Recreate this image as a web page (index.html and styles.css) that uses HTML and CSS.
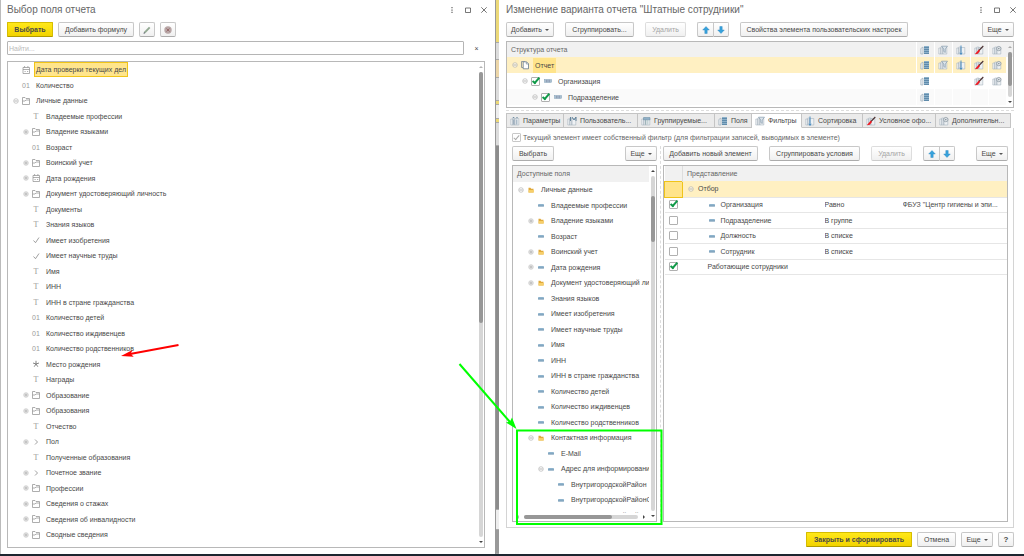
FILE: index.html
```html
<!DOCTYPE html>
<html lang="ru">
<head>
<meta charset="utf-8">
<title>Изменение варианта отчета</title>
<link rel="stylesheet" href="styles.css">
</head>
<body>
<svg class="defs" aria-hidden="true">
  <symbol id="plus" viewBox="0 0 10 10"><circle cx="5" cy="5" r="2.300" fill="#f4f4f4" stroke="#bbb" stroke-width=".6"/><path d="M3.400 5h3.200M5 3.400v3.200" stroke="#999" stroke-width=".6"/></symbol>
  <symbol id="minus" viewBox="0 0 10 10"><circle cx="5" cy="5" r="2.300" fill="#fff" fill-opacity=".6" stroke="#aaa" stroke-width=".6"/><path d="M3.400 5h3.200" stroke="#888" stroke-width=".6"/></symbol>
  <symbol id="folder" viewBox="0 0 10 10"><path d="M1.500 8.500v-7h2.500l1 1h3.500v6zM1.500 5h2.500l1-1h3.500" fill="none" stroke="#999" stroke-width=".8"/></symbol>
  <symbol id="cal" viewBox="0 0 10 10"><path d="M2 2.500h6.500v6H2zM2 4.500h6.500M3.600 1v1.500M6.900 1v1.500M3.500 6.500h1.200M6 6.500h1.200" fill="none" stroke="#8c8c8c" stroke-width=".7"/></symbol>
  <symbol id="tick" viewBox="0 0 10 10"><path d="M2.500 5.500l2 2.200L8 2.500" fill="none" stroke="#888" stroke-width=".8"/></symbol>
  <symbol id="chev" viewBox="0 0 10 10"><path d="M4 2.500L6.500 5 4 7.500" fill="none" stroke="#888" stroke-width=".8"/></symbol>
  <symbol id="star" viewBox="0 0 10 10"><path d="M5 5V1.800M5 5L2 4M5 5l3-1M5 5L3.200 7.700M5 5l1.800 2.700" fill="none" stroke="#777" stroke-width=".9"/></symbol>
  <symbol id="yfold" viewBox="0 0 10 10"><path d="M2.500 2.800h2l.7.9h2.300v3.800h-5z" fill="#e0a93a"/><path d="M3 5h4.800v2.500H2.500z" fill="#f7cf6a"/></symbol>
  <symbol id="dash" viewBox="0 0 10 10"><rect x="2" y="4" width="6" height="2.400" rx=".4" fill="#8fb4cd"/><path d="M2 6h6" stroke="#6889a5" stroke-width=".6"/></symbol>
  <symbol id="group" viewBox="0 0 10 10"><rect x="1.500" y="3.700" width="7" height="2.600" fill="#a9bfd0" stroke="#7d9bb3" stroke-width=".5"/><path d="M3.800 3.700v2.600M6.200 3.700v2.600" stroke="#668" stroke-width=".5"/></symbol>
  <symbol id="pages" viewBox="0 0 10 10"><path d="M1.500 1.500h3.500M1.500 1.500v6h1.500" fill="none" stroke="#7d8995" stroke-width=".8"/><path d="M3.200 1.800h3.300l2 2v5H3.200z" fill="#fff" stroke="#66798a" stroke-width=".8"/><path d="M6.300 1.800v2.200h2.200" fill="none" stroke="#66798a" stroke-width=".6"/></symbol>
  <symbol id="frame" viewBox="0 0 10 10"><path d="M.8 9V3h2v6zM2.800 2h2v7h-2zM4.800 2.500h4V9h-4z" fill="#eef1f4" stroke="#9babb7" stroke-width=".5"/></symbol>
  <symbol id="fields" viewBox="0 0 10 10"><path d="M.8 9V3.500L3 2v7z" fill="#e8edf1" stroke="#95a6b3" stroke-width=".6"/><path d="M4 1h5v8H4z" fill="#8db1ca"/><path d="M4 2.500h5M4 4.500h5M4 6.500h5M4 8.500h5" stroke="#4d7b9d" stroke-width=".7"/></symbol>
  <symbol id="filter" viewBox="0 0 10 10"><use href="#frame"/><path d="M3.500 1.200h6L7.300 4v3.500L5.800 6.500V4z" fill="#dbe4eb" stroke="#7890a2" stroke-width=".6"/></symbol>
  <symbol id="sort" viewBox="0 0 10 10"><use href="#frame"/><path d="M5 .5v8.800M3.800 7.800L5 9.400l1.200-1.600" fill="none" stroke="#3c87c0" stroke-width=".9"/></symbol>
  <symbol id="brush" viewBox="0 0 10 10"><use href="#frame"/><path d="M9.300 1L5 5.500" stroke="#4b3030" stroke-width="1.100"/><path d="M4.800 4.600L.8 9.300l3-.6L6 6z" fill="#f01820"/></symbol>
  <symbol id="gear" viewBox="0 0 10 10"><use href="#frame"/><circle cx="6.800" cy="3.600" r="2.200" fill="#dde2e6" stroke="#87939d" stroke-width=".7"/><circle cx="6.800" cy="3.600" r=".7" fill="#73818c"/></symbol>
  <symbol id="params" viewBox="0 0 10 10"><use href="#frame"/><path d="M2.500 1.200l1 1 1-1zM6 1.200l1 1 1-1z" fill="#456c88"/><path d="M3.800 3.500v5M6.800 3.500v5" stroke="#64839a" stroke-width=".7"/></symbol>
  <symbol id="user" viewBox="0 0 10 10"><use href="#frame"/><path d="M3.500 1v4M5 1l2 3 2-3v4" fill="none" stroke="#486f8c" stroke-width=".8"/></symbol>
  <symbol id="grp" viewBox="0 0 10 10"><use href="#frame"/><path d="M2.500 1.500h6.500v2.300H2.500z" fill="#8fb0c7" stroke="#6788a0" stroke-width=".5"/><path d="M4.500 4v4.500M6.800 4v4.500" stroke="#8aa" stroke-width=".6"/></symbol>
  <symbol id="up" viewBox="0 0 10 10"><path d="M5 1.500L8.300 5H6.200v3.500H3.800V5H1.700z" fill="#36a2dc" stroke="#2b84bd" stroke-width=".4"/></symbol>
  <symbol id="down" viewBox="0 0 10 10"><path d="M5 8.500L1.700 5h2.100V1.500h2.400V5h2.100z" fill="#36a2dc" stroke="#2b84bd" stroke-width=".4"/></symbol>
  <symbol id="pencil" viewBox="0 0 10 10"><path d="M1.800 8.400l.6-2L7 1.700l1.400 1.400-4.600 4.600z" fill="#92a992"/><path d="M1.500 8.700l.5-1.700L3.300 8.200z" fill="#667"/></symbol>
  <symbol id="stop" viewBox="0 0 10 10"><circle cx="5" cy="5" r="3.700" fill="#b8a6a6"/><path d="M3.500 3.500l3 3M6.500 3.500l-3 3" stroke="#986c6c" stroke-width="1"/></symbol>
  <symbol id="dots" viewBox="0 0 10 10"><path d="M4.500 2h1v1.300h-1zM4.500 4.400h1v1.300h-1zM4.500 6.800h1v1.300h-1z" fill="#444"/></symbol>
  <symbol id="max" viewBox="0 0 10 10"><path d="M2.500 3h5v4.500h-5z" fill="none" stroke="#555" stroke-width=".8"/></symbol>
  <symbol id="close" viewBox="0 0 10 10"><path d="M2.300 2.300l5.400 5.400M7.700 2.300L2.300 7.700" stroke="#555" stroke-width=".8"/></symbol>
</svg>

<div class="desktop">
  <section class="window picker">
    <header class="titlebar">
      <h1>Выбор поля отчета</h1>
      <div class="controls">
        <button aria-label="Меню"><svg><use href="#dots"/></svg></button>
        <button aria-label="Развернуть"><svg><use href="#max"/></svg></button>
        <button aria-label="Закрыть"><svg><use href="#close"/></svg></button>
      </div>
    </header>
    <div class="toolbar tight">
      <button class="btn primary w46">Выбрать</button>
      <button class="btn w76">Добавить формулу</button>
      <button class="btn square" aria-label="Изменить"><svg><use href="#pencil"/></svg></button>
      <button class="btn square" aria-label="Удалить"><svg><use href="#stop"/></svg></button>
    </div>
    <div class="search">
      <input type="text" placeholder="Найти..." aria-label="Найти">
      <button aria-label="Очистить">×</button>
    </div>
    <div class="box listbox">
      <ul class="tree">
        <li><i></i><svg><use href="#cal"/></svg><span class="selected">Дата проверки текущих дел</span></li>
        <li><i></i><b>01</b><span>Количество</span></li>
        <li><svg><use href="#minus"/></svg><svg><use href="#folder"/></svg><span>Личные данные</span></li>
        <li class="l1"><i></i><b class="t">T</b><span>Владеемые профессии</span></li>
        <li class="l1"><svg><use href="#plus"/></svg><svg><use href="#folder"/></svg><span>Владение языками</span></li>
        <li class="l1"><i></i><b>01</b><span>Возраст</span></li>
        <li class="l1"><svg><use href="#plus"/></svg><svg><use href="#folder"/></svg><span>Воинский учет</span></li>
        <li class="l1"><svg><use href="#plus"/></svg><svg><use href="#cal"/></svg><span>Дата рождения</span></li>
        <li class="l1"><svg><use href="#plus"/></svg><svg><use href="#folder"/></svg><span>Документ удостоверяющий личность</span></li>
        <li class="l1"><i></i><b class="t">T</b><span>Документы</span></li>
        <li class="l1"><i></i><b class="t">T</b><span>Знания языков</span></li>
        <li class="l1"><i></i><svg><use href="#tick"/></svg><span>Имеет изобретения</span></li>
        <li class="l1"><i></i><svg><use href="#tick"/></svg><span>Имеет научные труды</span></li>
        <li class="l1"><i></i><b class="t">T</b><span>Имя</span></li>
        <li class="l1"><i></i><b class="t">T</b><span>ИНН</span></li>
        <li class="l1"><i></i><b class="t">T</b><span>ИНН в стране гражданства</span></li>
        <li class="l1"><i></i><b>01</b><span>Количество детей</span></li>
        <li class="l1"><i></i><b>01</b><span>Количество иждивенцев</span></li>
        <li class="l1"><i></i><b>01</b><span>Количество родственников</span></li>
        <li class="l1"><i></i><svg><use href="#star"/></svg><span>Место рождения</span></li>
        <li class="l1"><i></i><b class="t">T</b><span>Награды</span></li>
        <li class="l1"><svg><use href="#plus"/></svg><svg><use href="#folder"/></svg><span>Образование</span></li>
        <li class="l1"><svg><use href="#plus"/></svg><svg><use href="#folder"/></svg><span>Образования</span></li>
        <li class="l1"><i></i><b class="t">T</b><span>Отчество</span></li>
        <li class="l1"><svg><use href="#plus"/></svg><svg><use href="#chev"/></svg><span>Пол</span></li>
        <li class="l1"><i></i><b class="t">T</b><span>Полученные образования</span></li>
        <li class="l1"><svg><use href="#plus"/></svg><svg><use href="#chev"/></svg><span>Почетное звание</span></li>
        <li class="l1"><svg><use href="#plus"/></svg><svg><use href="#folder"/></svg><span>Профессии</span></li>
        <li class="l1"><svg><use href="#plus"/></svg><svg><use href="#folder"/></svg><span>Сведения о стажах</span></li>
        <li class="l1"><svg><use href="#plus"/></svg><svg><use href="#folder"/></svg><span>Сведения об инвалидности</span></li>
        <li class="l1"><svg><use href="#plus"/></svg><svg><use href="#folder"/></svg><span>Сводные сведения</span></li>
        <li class="l1"><i></i><i></i><span>СНИЛС</span></li>
      </ul>
      <div class="vscroll"><i class="arr up dim"></i><div class="track"><div class="thumb long"></div></div><i class="arr"></i></div>
    </div>
  </section>

  <div class="gutter" aria-hidden="true">
    <i class="g-yellow"></i><i class="g-grey"></i><i class="g-peach"></i><i class="g-grey tall"></i><i class="g-yellow small"></i><i class="g-light short"></i><i class="g-yellow small"></i><i class="g-grey tall"></i><i class="g-rest"></i><i class="g-light"></i><i class="g-end"></i>
  </div>

  <section class="window variant">
    <header class="titlebar">
      <h1>Изменение варианта отчета "Штатные сотрудники"</h1>
      <div class="controls">
        <button aria-label="Меню"><svg><use href="#dots"/></svg></button>
        <button aria-label="Развернуть"><svg><use href="#max"/></svg></button>
        <button aria-label="Закрыть"><svg><use href="#close"/></svg></button>
      </div>
    </header>
    <div class="toolbar">
      <button class="btn more w48">Добавить</button>
      <button class="btn w69">Сгруппировать...</button>
      <button class="btn w41" disabled>Удалить</button>
      <span class="pair"><button class="btn square" aria-label="Вверх"><svg><use href="#up"/></svg></button><button class="btn square" aria-label="Вниз"><svg><use href="#down"/></svg></button></span>
      <button class="btn w168">Свойства элемента пользовательских настроек</button>
      <button class="btn more w32 push">Еще</button>
    </div>

    <div class="box structure">
      <table>
        <thead><tr><th>Структура отчета</th>
          <th class="ic"><svg><use href="#fields"/></svg></th><th class="ic"><svg><use href="#filter"/></svg></th><th class="ic"><svg><use href="#sort"/></svg></th><th class="ic"><svg><use href="#brush"/></svg></th><th class="ic"><svg><use href="#gear"/></svg></th></tr></thead>
        <tbody>
          <tr class="current"><td><div class="node"><svg><use href="#minus"/></svg><svg><use href="#pages"/></svg><span class="hl">Отчет</span></div></td>
            <td class="ic"><svg><use href="#fields"/></svg></td><td class="ic"><svg><use href="#filter"/></svg></td><td class="ic"><svg><use href="#sort"/></svg></td><td class="ic"><svg><use href="#brush"/></svg></td><td class="ic"><svg><use href="#gear"/></svg></td></tr>
          <tr><td><div class="node l1"><svg><use href="#minus"/></svg><input type="checkbox" checked aria-label="Организация"><svg><use href="#group"/></svg><span>Организация</span></div></td>
            <td class="ic"><svg><use href="#fields"/></svg></td><td></td><td></td><td class="ic"><svg><use href="#brush"/></svg></td><td class="ic"><svg><use href="#gear"/></svg></td></tr>
          <tr class="alt"><td><div class="node l2"><svg><use href="#minus"/></svg><input type="checkbox" checked aria-label="Подразделение"><svg><use href="#group"/></svg><span>Подразделение</span></div></td>
            <td class="ic"><svg><use href="#fields"/></svg></td><td></td><td></td><td></td><td></td></tr>
        </tbody>
      </table>
      <div class="vscroll"><i class="arr up dim"></i><div class="track"><div class="thumb most"></div></div><i class="arr"></i></div>
    </div>
    <div class="splitter"></div>

    <div class="tabs" role="tablist">
      <button role="tab"><svg><use href="#params"/></svg><span>Параметры</span></button>
      <button role="tab"><svg><use href="#user"/></svg><span>Пользователь...</span></button>
      <button role="tab"><svg><use href="#grp"/></svg><span>Группируемые...</span></button>
      <button role="tab"><svg><use href="#fields"/></svg><span>Поля</span></button>
      <button role="tab" aria-selected="true"><svg><use href="#filter"/></svg><span>Фильтры</span></button>
      <button role="tab"><svg><use href="#sort"/></svg><span>Сортировка</span></button>
      <button role="tab"><svg><use href="#brush"/></svg><span>Условное офо...</span></button>
      <button role="tab"><svg><use href="#gear"/></svg><span>Дополнительн...</span></button>
    </div>

    <div class="pane">
      <label class="own"><input type="checkbox" checked disabled>Текущий элемент имеет собственный фильтр (для фильтрации записей, выводимых в элементе)</label>
      <div class="columns">
        <div class="col">
          <div class="toolbar">
            <button class="btn w42">Выбрать</button>
            <button class="btn more w32 push">Еще</button>
          </div>
          <div class="box available">
            <div class="content">
              <div class="head">Доступные поля</div>
              <ul class="tree">
                <li><svg><use href="#minus"/></svg><svg><use href="#yfold"/></svg><span>Личные данные</span></li>
                <li class="l1"><i></i><svg><use href="#dash"/></svg><span>Владеемые профессии</span></li>
                <li class="l1"><svg><use href="#plus"/></svg><svg><use href="#yfold"/></svg><span>Владение языками</span></li>
                <li class="l1"><i></i><svg><use href="#dash"/></svg><span>Возраст</span></li>
                <li class="l1"><svg><use href="#plus"/></svg><svg><use href="#yfold"/></svg><span>Воинский учет</span></li>
                <li class="l1"><svg><use href="#plus"/></svg><svg><use href="#dash"/></svg><span>Дата рождения</span></li>
                <li class="l1"><svg><use href="#plus"/></svg><svg><use href="#yfold"/></svg><span>Документ удостоверяющий личность</span></li>
                <li class="l1"><i></i><svg><use href="#dash"/></svg><span>Знания языков</span></li>
                <li class="l1"><i></i><svg><use href="#dash"/></svg><span>Имеет изобретения</span></li>
                <li class="l1"><i></i><svg><use href="#dash"/></svg><span>Имеет научные труды</span></li>
                <li class="l1"><i></i><svg><use href="#dash"/></svg><span>Имя</span></li>
                <li class="l1"><i></i><svg><use href="#dash"/></svg><span>ИНН</span></li>
                <li class="l1"><i></i><svg><use href="#dash"/></svg><span>ИНН в стране гражданства</span></li>
                <li class="l1"><i></i><svg><use href="#dash"/></svg><span>Количество детей</span></li>
                <li class="l1"><i></i><svg><use href="#dash"/></svg><span>Количество иждивенцев</span></li>
                <li class="l1"><i></i><svg><use href="#dash"/></svg><span>Количество родственников</span></li>
                <li class="l1"><svg><use href="#minus"/></svg><svg><use href="#yfold"/></svg><span>Контактная информация</span></li>
                <li class="l2"><i></i><svg><use href="#dash"/></svg><span>E-Mail</span></li>
                <li class="l2"><svg><use href="#minus"/></svg><svg><use href="#dash"/></svg><span>Адрес для информирования</span></li>
                <li class="l3"><i></i><svg><use href="#dash"/></svg><span>ВнутригородскойРайон</span></li>
                <li class="l3"><i></i><svg><use href="#dash"/></svg><span>ВнутригородскойРайонСокращение</span></li>
                <li class="l3"><i></i><svg><use href="#dash"/></svg><span>ВнутригородскойРайонТип</span></li>
              </ul>
              <div class="hscroll"><i class="arr left dim"></i><div class="track"><div class="thumb"></div></div><i class="arr right"></i></div>
            </div>
            <div class="vscroll"><i class="arr up"></i><div class="track"><div class="thumb middle"></div></div><i class="arr"></i></div>
          </div>
        </div>
        <div class="vsplit"></div>
        <div class="col">
          <div class="toolbar">
            <button class="btn w95">Добавить новый элемент</button>
            <button class="btn w91">Сгруппировать условия</button>
            <button class="btn w41" disabled>Удалить</button>
            <span class="pair"><button class="btn square" aria-label="Вверх"><svg><use href="#up"/></svg></button><button class="btn square" aria-label="Вниз"><svg><use href="#down"/></svg></button></span>
            <button class="btn more w32 push">Еще</button>
          </div>
          <div class="box filters">
            <table>
              <colgroup><col class="c-check"><col class="c-name"><col class="c-cond"><col></colgroup>
              <thead><tr><th></th><th colspan="3">Представление</th></tr></thead>
              <tbody>
                <tr class="current"><td class="cell"></td><td colspan="3"><div class="node"><svg><use href="#minus"/></svg><span>Отбор</span></div></td></tr>
                <tr><td><input type="checkbox" checked aria-label="Организация"></td><td><div class="node item"><svg><use href="#dash"/></svg><span>Организация</span></div></td><td>Равно</td><td>ФБУЗ "Центр гигиены и эпи...</td></tr>
                <tr><td><input type="checkbox" aria-label="Подразделение"></td><td><div class="node item"><svg><use href="#dash"/></svg><span>Подразделение</span></div></td><td>В группе</td><td></td></tr>
                <tr><td><input type="checkbox" aria-label="Должность"></td><td><div class="node item"><svg><use href="#dash"/></svg><span>Должность</span></div></td><td>В списке</td><td></td></tr>
                <tr><td><input type="checkbox" aria-label="Сотрудник"></td><td><div class="node item"><svg><use href="#dash"/></svg><span>Сотрудник</span></div></td><td>В списке</td><td></td></tr>
                <tr><td><input type="checkbox" checked aria-label="Работающие сотрудники"></td><td colspan="3"><div class="node plain">Работающие сотрудники</div></td></tr>
              </tbody>
            </table>
          </div>
        </div>
      </div>
    </div>

    <footer class="toolbar tight footer">
      <button class="btn primary w106">Закрыть и сформировать</button>
      <button class="btn w39">Отмена</button>
      <button class="btn more w32">Еще</button>
      <button class="btn square strong">?</button>
    </footer>
  </section>
</div>

<svg class="marks" viewBox="0 0 1024 556" aria-hidden="true">
  <path d="M178.500 345L130 354" stroke="#f00" stroke-width="2"/>
  <path d="M121 356l11.500-6-1.800 3.800 3 3z" fill="#f00"/>
  <path d="M459.500 364L510 422" stroke="#0f0" stroke-width="2"/>
  <path d="M516.500 429l-10.500-6.500 4-1 2-4z" fill="#0f0"/>
  <rect x="517" y="430.500" width="144.500" height="93.500" fill="none" stroke="#0f0" stroke-width="2"/>
</svg>
</body>
</html>
```
FILE: styles.css
```css
* { box-sizing: border-box; }

body {
  margin: 0;
  background: #fff;
  color: #484848;
  font: 7px/9px "Liberation Sans", Arial, sans-serif;
}

button, input { font: inherit; color: inherit; margin: 0; padding: 0; }
svg { display: block; width: 10px; height: 10px; flex: none; }
.defs { position: absolute; width: 0; height: 0; }

.marks {
  position: absolute;
  top: 0;
  left: 0;
  width: 1024px;
  height: 556px;
  pointer-events: none;
}

.desktop {
  display: grid;
  grid-template-columns: 495fr 4px 525fr;
  height: 100vh;
  border-bottom: 2px solid #1d2630;
}

.window { display: flex; flex-direction: column; min-width: 0; min-height: 0; }
.picker { padding: 0 10px 6px 6px; border-left: 1px solid #bbb; }
.variant { padding: 0 10px 7px 7px; }

/* title bar */
.titlebar { display: flex; justify-content: space-between; align-items: flex-start; height: 22px; flex: none; }
.titlebar h1 { margin: 0; font-size: 10px; line-height: 20px; font-weight: 400; color: #666; }
.controls { display: flex; gap: 6px; margin: 5px -4px 0 0; }
.controls button { border: 0; background: none; }

/* buttons */
.toolbar { display: flex; gap: 11px; flex: none; height: 15px; }
.tight { gap: 5px; }
.push { margin-left: auto; }
.btn {
  height: 15px;
  border: 1px solid #c8c8c8;
  border-bottom-color: #acacac;
  border-radius: 2px;
  background: linear-gradient(#fff, #f0f0f0);
  white-space: nowrap;
  flex: none;
}
.btn:disabled { color: #a5a5a5; border-color: #ddd; border-bottom-color: #ccc; }
.primary { background: linear-gradient(#ffe81a, #f2d300); border-color: #d6bd00; border-bottom-color: #b09b00; border-radius: 1px; font-weight: 700; }
.square { width: 16px; display: grid; place-items: center; }
.strong { font-weight: 700; font-size: 8px; }
.pair { display: flex; }
.pair .btn:first-child { border-right: 0; border-radius: 2px 0 0 2px; }
.pair .btn:last-child { border-radius: 0 2px 2px 0; }
.more::after {
  content: "";
  display: inline-block;
  margin-left: 3px;
  vertical-align: 1px;
  border: 2px solid transparent;
  border-top-color: #555;
  border-bottom: 0;
}
.w32 { width: 32px; }
.w39 { width: 39px; }
.w41 { width: 41px; }
.w42 { width: 42px; }
.w46 { width: 46px; }
.w48 { width: 48px; }
.w69 { width: 69px; }
.w76 { width: 76px; }
.w91 { width: 91px; }
.w95 { width: 95px; }
.w106 { width: 106px; }
.w168 { width: 168px; }

/* search */
.search { display: flex; margin: 4px 0 6px; height: 14px; flex: none; }
.search input { flex: 1; border: 1px solid #b5b5b5; border-radius: 1px; padding: 0 1px; outline: 0; }
.search input::placeholder { color: #bbb; }
.search button { width: 21px; padding-left: 4px; border: 0; background: none; }

/* framed areas and scroll bars */
.box { display: flex; border: 1px solid #b8b8b8; min-height: 0; overflow: hidden; background: #fff; }
.listbox { flex: 1; }
.vscroll { width: 7px; flex: none; display: flex; flex-direction: column; align-items: center; padding: 4px 0; gap: 4px; }
.vscroll .track { flex: 1; width: 4px; border-radius: 2px; background: #d6d6d6; }
.thumb { background: #979797; border-radius: 2px; }
.long { height: 54%; }
.most { height: 75%; }
.middle { margin-top: 20px; height: 46px; }
.vscroll .track:has(.middle) { display: flow-root; }
.arr { border: 2px solid transparent; border-top-color: #444; border-bottom: 0; }
.arr.up { border-bottom: 2px solid #444; border-top: 0; }
.arr.left { border: 2px solid transparent; border-right-color: #444; border-left: 0; }
.arr.right { border: 2px solid transparent; border-left-color: #444; border-right: 0; }
.arr.dim { opacity: .4; }
.hscroll { display: flex; align-items: center; gap: 5px; height: 8px; padding: 0 4px; flex: none; }
.hscroll .track { flex: 1; height: 4px; border-radius: 2px; background: #d6d6d6; }
.hscroll .thumb { width: 77%; height: 4px; }

/* trees */
.tree { list-style: none; margin: 0; padding: 0; flex: 1; min-width: 0; min-height: 0; overflow: hidden; }
.tree li { display: flex; align-items: center; height: 15px; padding-left: 3px; white-space: nowrap; }
.tree li:nth-child(even) { height: 16px; }
.tree li > i { width: 10px; flex: none; }
.tree b { width: 10px; text-align: center; font-weight: 400; color: #999; flex: none; }
.tree .t { font-family: "Liberation Serif", serif; font-size: 8px; }
.tree span { margin-left: 5px; }
.tree .selected {
  margin-left: 3px;
  padding: 2px 1px;
  line-height: 9px;
  border: 1px solid #f0c419;
  background: #ffe58c;
}
.tree .l1 { padding-left: 13px; }
.tree .l2 { padding-left: 23px; }
.tree .l3 { padding-left: 33px; }

/* check boxes */
input[type="checkbox"] {
  appearance: none;
  position: relative;
  display: block;
  width: 9px;
  height: 9px;
  border: 1px solid #b0b0b0;
  border-radius: 1px;
  background: #fff;
  flex: none;
}
input[type="checkbox"]:checked::after {
  content: "";
  box-sizing: border-box;
  position: absolute;
  left: 2px;
  top: -2px;
  width: 4px;
  height: 8px;
  border: solid #119a49;
  border-width: 0 2px 2px 0;
  transform: rotate(40deg);
}
input[type="checkbox"]:disabled { border-color: #c8c8c8; }
input[type="checkbox"]:disabled::after { border-color: #aaa; border-width: 0 1px 1px 0; top: 0; width: 3px; height: 6px; }

/* tables */
table { border-collapse: collapse; table-layout: fixed; width: 100%; }
th, td { padding: 0; text-align: left; font-weight: 400; white-space: nowrap; overflow: hidden; }
th { height: 15px; background: #f1f1f1; color: #666; }
.node { display: flex; align-items: center; }
.current td { background: #fff0c2; }

.structure { margin-top: 4px; height: 67px; flex: none; background: linear-gradient(#f1f1f1 15px, #fff 15px); }
.structure table { flex: 1; align-self: flex-start; }
.structure th:first-child { padding-left: 4px; }
.structure .ic, .structure td + td { width: 18px; border-left: 1px solid #fff; }
.structure .ic svg { margin: 0 auto; }
.structure tbody tr { height: 16px; }
.structure thead tr { height: 15px; }
.structure .alt { background: #fafafa; }
.structure .node { padding-left: 3px; }
.structure .node.l1 { padding-left: 13px; }
.structure .node.l2 { padding-left: 23px; }
.structure input { margin: 0 3px 0 1px; }
.structure input ~ span { margin-left: 5px; }
.structure .hl { margin-left: 3px; padding: 3px 2px; background: #ffe48a; }

.splitter { margin: 2px 0; height: 1px; border-top: 1px dashed #ddd; flex: none; }

/* tabs */
.tabs {
  display: grid;
  grid-template-columns: 58fr 74fr 77fr 37fr 50fr 61fr 73fr 75fr;
  margin-right: 3px;
  height: 15px;
  flex: none;
}
.tabs button {
  display: flex;
  align-items: center;
  gap: 3px;
  min-width: 0;
  padding: 0 3px;
  border: 1px solid #c4c4c4;
  border-left-width: 0;
  background: #ebebeb;
  white-space: nowrap;
  overflow: hidden;
}
.tabs button:first-child { border-left-width: 1px; }
.tabs button[aria-selected="true"] { background: #fff; border-bottom-color: #fff; }

.pane { flex: 1; min-height: 0; display: flex; flex-direction: column; padding: 5px; border: 1px solid #d4d4d4; border-top: 0; }
.own { display: flex; align-items: center; gap: 2px; height: 9px; color: #666; flex: none; }
.columns { flex: 1; min-height: 0; display: grid; grid-template-columns: 145fr 6px 345fr; margin-top: 4px; }
.col { display: flex; flex-direction: column; min-width: 0; min-height: 0; gap: 4px; }
.vsplit { justify-self: center; border-left: 1px dashed #ddd; }
.col .box { flex: 1; }
.available .content { flex: 1; min-width: 0; display: flex; flex-direction: column; }
.head { height: 16px; padding: 3px 4px 0; background: #f1f1f1; color: #666; flex: none; }

.filters table { align-self: flex-start; }
.c-check { width: 18px; }
.c-name { width: 142px; }
.c-cond { width: 78px; }
.filters th + th { padding-left: 4px; border-left: 1px solid #ddd; }
.filters tr { height: 16px; }
.filters thead tr { height: 15px; }
.filters tbody tr:nth-child(even) { height: 15px; }
.filters tbody tr { border-bottom: 1px solid #e6e6e6; }
.filters td input { margin-left: 4px; }
.filters .cell { background: #ffe48a; border: 1px solid #f0c419; }
.filters .current .node { padding-left: 3px; gap: 2px; }
.filters .item { padding-left: 24px; gap: 4px; }
.filters .plain { padding-left: 25px; }

.footer { justify-content: flex-end; margin-top: 4px; }

/* strip of the window behind */
.gutter { display: flex; flex-direction: column; border-left: 1px solid #999; }
.gutter i { flex: none; border-bottom: 1px solid #aaa; }
.g-yellow { height: 43px; background: #ecd978; }
.g-grey { height: 17px; background: #dcdcdc; }
.g-grey.tall { height: 23px; }
.g-peach { height: 18px; background: #ecd6a8; }
.g-yellow.small { height: 4px; }
.g-light { height: 20px; background: #eee; }
.g-light.short { height: 14px; }
.gutter .g-rest { flex: 1; background: #8c8c8c; }
.g-end { height: 24px; background: #999; }
```
